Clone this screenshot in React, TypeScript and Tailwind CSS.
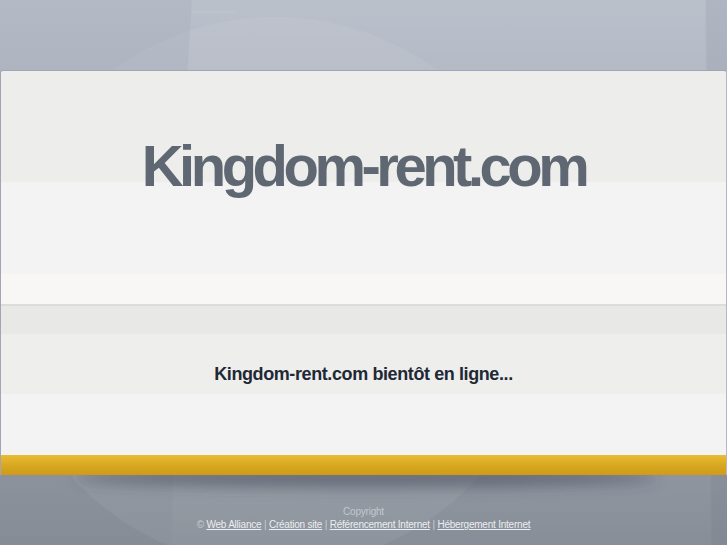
import React from "react";

function Backdrop() {
  return (
    <svg
      className="absolute inset-0 h-full w-full"
      viewBox="0 0 727 545"
      preserveAspectRatio="none"
      aria-hidden="true"
    >
      <defs>
        <linearGradient id="bg" x1="0" y1="0" x2="0" y2="1">
          <stop offset="0" stopColor="#b3b9c5" />
          <stop offset="0.5" stopColor="#9ea5b0" />
          <stop offset="1" stopColor="#858c96" />
        </linearGradient>
        <linearGradient id="band" x1="0" y1="0" x2="0" y2="1">
          <stop offset="0" stopColor="#ffffff" stopOpacity="0.1" />
          <stop offset="1" stopColor="#ffffff" stopOpacity="0.02" />
        </linearGradient>
        <filter id="blur" x="-20%" y="-200%" width="140%" height="500%">
          <feGaussianBlur stdDeviation="7" />
        </filter>
      </defs>
      <rect x="0" y="0" width="727" height="545" fill="url(#bg)" />
      <path d="M192 0 L706 0 L712 545 L172 545 Q178 200 192 0 Z" fill="url(#band)" />
      <path d="M705 0 L727 0 L727 545 L711 545 Z" fill="#000000" fillOpacity="0.02" />
      <line x1="192" y1="12" x2="235" y2="12" stroke="#ffffff" strokeOpacity="0.12" />
      <circle cx="275" cy="292" r="275" fill="#ffffff" fillOpacity="0.06" />
      <ellipse cx="366" cy="478" rx="292" ry="9" fill="#3e4452" fillOpacity="0.55" filter="url(#blur)" />
    </svg>
  );
}

export default function App() {
  return (
    <div
      className="relative h-[545px] w-full overflow-hidden"
      style={{ fontFamily: '"Liberation Sans", Arial, sans-serif' }}
    >
      <Backdrop />
      <div className="relative flex flex-col pt-[70px]">
        <div className="overflow-hidden rounded-t-[3px] border-x border-t border-[#a2a5b4] border-r-[#b4b7c2]">
          <div className="h-[233px] bg-[linear-gradient(to_bottom,#ededeb_0px,#ededeb_111px,#f3f3f3_111px,#f3f3f3_203px,#f8f7f5_203px,#f8f7f5_233px)] pt-[66px] text-center">
            <h1 className="text-[58px] font-bold leading-none tracking-[-4.5px] text-[#5f6872]">
              Kingdom-rent.com
            </h1>
          </div>
          <div className="h-[2px] bg-[#dcdcda]" />
          <div className="h-[149px] bg-[linear-gradient(to_bottom,#e8e8e6_0px,#e8e8e6_28px,#eeeeec_28px,#eeeeec_88px,#f3f3f3_88px,#f3f3f3_149px)] pt-[59px] text-center">
            <p className="text-[18px] font-bold leading-none tracking-[-0.4px] text-[#1e2935]">
              Kingdom-rent.com bientôt en ligne...
            </p>
          </div>
          <div className="h-[20px] bg-[linear-gradient(to_bottom,#e9bc33,#d9a821_50%,#cd9b18)]" />
        </div>
        <footer className="flex flex-col items-center pt-[30px] text-[10px] leading-[13px] tracking-[-0.22px]">
          <span className="text-[#c3c7cd]">Copyright</span>
          <span className="text-[#c9cdd3]">
            ©{" "}
            <a className="text-[#eceef1] underline">Web Alliance</a> |{" "}
            <a className="text-[#eceef1] underline">Création site</a> |{" "}
            <a className="text-[#eceef1] underline">Référencement Internet</a> |{" "}
            <a className="text-[#eceef1] underline">Hébergement Internet</a>
          </span>
        </footer>
      </div>
    </div>
  );
}
